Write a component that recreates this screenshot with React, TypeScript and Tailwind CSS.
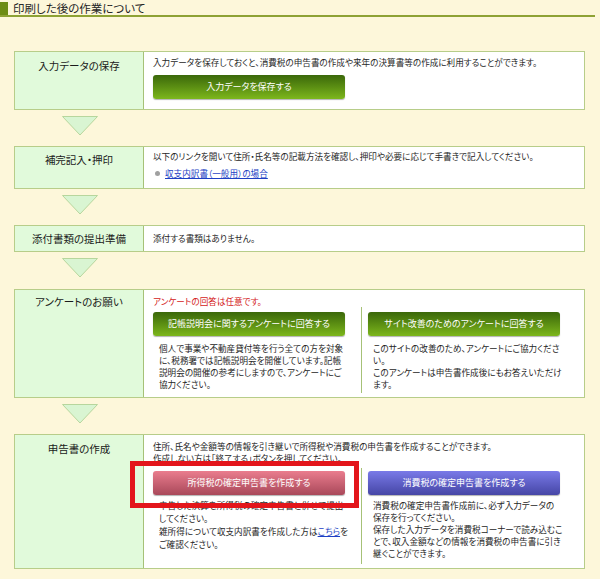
import React from "react";

type StepProps = { label: string; h: string; lpt: string; children: React.ReactNode };

function Step({ label, h, lpt, children }: StepProps) {
  return (
    <div className={`ml-[14px] w-[571px] flex border border-[#b7cd89] bg-white ${h}`}>
      <div
        className={`w-[129px] shrink-0 bg-[#e1fadb] border-r border-[#a6c177] text-center text-[10.5px] leading-[13px] text-[#1a1a1a] ${lpt}`}
      >
        {label}
      </div>
      <div className="flex-1 pl-[9px] text-[8.6px] leading-[12px] text-[#262626] whitespace-nowrap">{children}</div>
    </div>
  );
}

function Arrow({ h }: { h: string }) {
  return (
    <div className={`pl-[62px] pt-[6px] ${h}`}>
      <svg width="36" height="20" viewBox="0 0 36 20">
        <polygon points="0.5,0.5 35.5,0.5 18,19" fill="#d9f5d2" stroke="#b7d69d" strokeWidth="1" />
      </svg>
    </div>
  );
}

type Tone = "green" | "pink" | "blue";
const tones: Record<Tone, string> = {
  green: "bg-linear-to-b from-[#3b680a] to-[#7db71c]",
  pink: "bg-linear-to-b from-[#ea7d8e] to-[#a9485a]",
  blue: "bg-linear-to-b from-[#7a7ae8] to-[#4646a6]",
};

function Btn({ tone, children }: { tone: Tone; children: React.ReactNode }) {
  return (
    <div
      className={`w-[192px] h-[24px] rounded-[3px] flex items-center justify-center text-white text-[9px] shadow-[0_1px_1px_rgba(0,0,0,0.3)] ${tones[tone]}`}
    >
      {children}
    </div>
  );
}

export default function App() {
  return (
    <div className="relative w-[600px] h-[579px] overflow-hidden bg-[#fdf7da] font-['Noto_Sans_CJK_JP',sans-serif] [font-feature-settings:'palt']">
      {/* section heading */}
      <div className="pt-[2px] mr-[5px]">
        <div className="flex items-end h-[15px] border-b-[2px] border-[#8ea234]">
          <span className="w-[8px] h-[13px] bg-[#6d8c14]" />
          <span className="ml-[5px] text-[11.5px] leading-[14px] text-[#262626]">印刷した後の作業について</span>
        </div>
      </div>

      <div className="mt-[34px]">
        <Step label="入力データの保存" h="h-[59px]" lpt="pt-[7px]">
          <div className="pt-[4px]">入力データを保存しておくと、消費税の申告書の作成や来年の決算書等の作成に利用することができます。</div>
          <div className="mt-[7px]">
            <Btn tone="green">入力データを保存する</Btn>
          </div>
        </Step>

        <Arrow h="h-[36px]" />

        <Step label="補完記入・押印" h="h-[43px]" lpt="pt-[6px]">
          <div className="pt-[3px]">以下のリンクを開いて住所・氏名等の記載方法を確認し、押印や必要に応じて手書きで記入してください。</div>
          <div className="mt-[5px] flex items-center pl-[2px]">
            <span className="w-[5px] h-[5px] rounded-full bg-[#a0a0a0]" />
            <a className="ml-[5px] text-[#1d3fc4] underline" href="#">収支内訳書（一般用）の場合</a>
          </div>
        </Step>

        <Arrow h="h-[36px]" />

        <Step label="添付書類の提出準備" h="h-[27px]" lpt="pt-[6px]">
          <div className="pt-[6px]">添付する書類はありません。</div>
        </Step>

        <Arrow h="h-[37px]" />

        <Step label="アンケートのお願い" h="h-[109px]" lpt="pt-[5px]">
          <div className="pt-[5px] text-[#d42222]">アンケートの回答は任意です。</div>
          <div className="flex h-[86px]">
            <div className="w-[208px] pt-[5px]">
              <Btn tone="green">記帳説明会に関するアンケートに回答する</Btn>
              <div className="mt-[6px] pl-[6px]">
                個人で事業や不動産貸付等を行う全ての方を対象
                <br />
                に、税務署では記帳説明会を開催しています。記帳
                <br />
                説明会の開催の参考にしますので、アンケートにご
                <br />
                協力ください。
              </div>
            </div>
            <div className="border-l border-[#a6c177] pl-[6px] pt-[5px]">
              <Btn tone="green">サイト改善のためのアンケートに回答する</Btn>
              <div className="mt-[6px] pl-[5px]">
                このサイトの改善のため、アンケートにご協力くださ
                <br />
                い。
                <br />
                このアンケートは申告書作成後にもお答えいただけ
                <br />
                ます。
              </div>
            </div>
          </div>
        </Step>

        <Arrow h="h-[36px]" />

        <Step label="申告書の作成" h="h-[135px]" lpt="pt-[7px]">
          <div className="pt-[5px]">
            住所、氏名や金額等の情報を引き継いで所得税や消費税の申告書を作成することができます。
            <br />
            作成しない方は「終了する」ボタンを押してください。
          </div>
          <div className="flex h-[100px]">
            <div className="w-[208px] pt-[7px]">
              <Btn tone="pink">所得税の確定申告書を作成する</Btn>
              <div className="mt-[4px] pl-[6px] leading-[13px]">
                申告した決算を所得税の確定申告書と併せて提出
                <br />
                してください。
                <br />
                雑所得について収支内訳書を作成した方は
                <a className="text-[#1d3fc4] underline" href="#">こちら</a>
                を
                <br />
                ご確認ください。
              </div>
            </div>
            <div className="border-l border-[#a6c177] pl-[6px] pt-[7px] mt-[4px]">
              <div className="-mt-[4px]">
                <Btn tone="blue">消費税の確定申告書を作成する</Btn>
              </div>
              <div className="mt-[4px] pl-[5px]">
                消費税の確定申告書作成前に、必ず入力データの
                <br />
                保存を行ってください。
                <br />
                保存した入力データを消費税コーナーで読み込むこ
                <br />
                とで、収入金額などの情報を消費税の申告書に引き
                <br />
                継ぐことができます。
              </div>
            </div>
          </div>
        </Step>
      </div>

      {/* red highlight frame over the income-tax button */}
      <div className="absolute left-[130px] top-[461px] w-[229px] h-[47px] border-[5px] border-[#e3151b]" />
    </div>
  );
}
